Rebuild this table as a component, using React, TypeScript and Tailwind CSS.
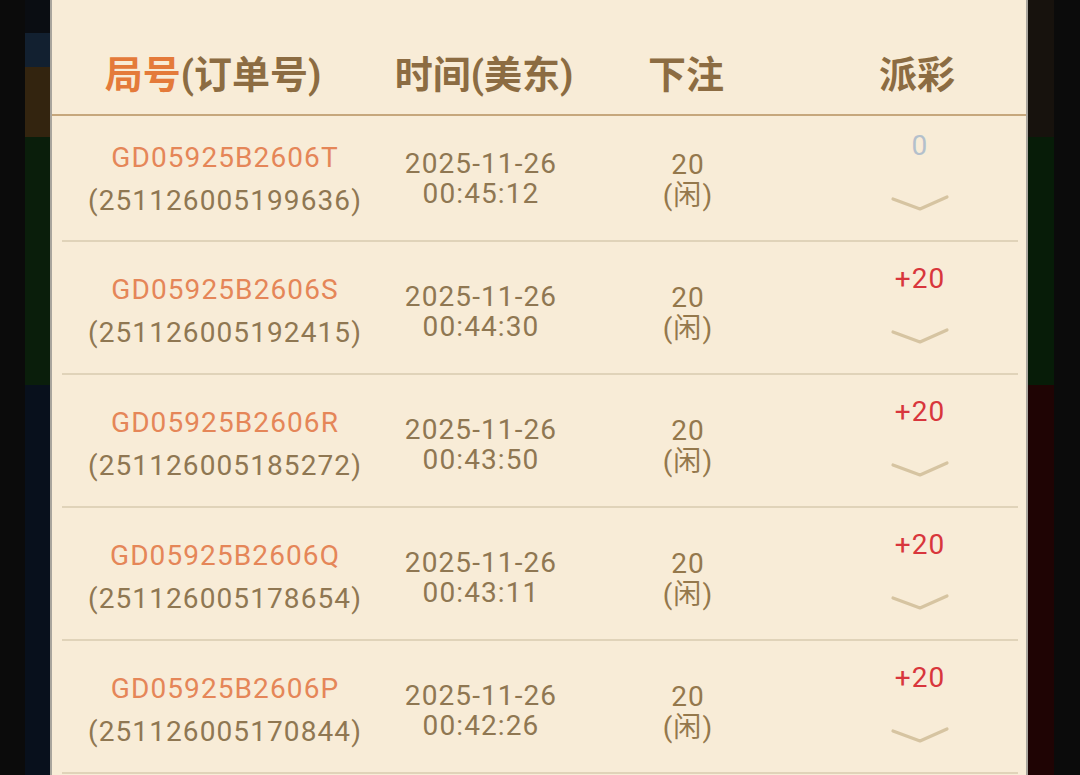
import React from "react";

type Row = { id: string; order: string; date: string; time: string; bet: string; side: string; payout: string };

const rows: Row[] = [
  { id: "GD05925B2606T", order: "(251126005199636)", date: "2025-11-26", time: "00:45:12", bet: "20", side: "(闲)", payout: "0" },
  { id: "GD05925B2606S", order: "(251126005192415)", date: "2025-11-26", time: "00:44:30", bet: "20", side: "(闲)", payout: "+20" },
  { id: "GD05925B2606R", order: "(251126005185272)", date: "2025-11-26", time: "00:43:50", bet: "20", side: "(闲)", payout: "+20" },
  { id: "GD05925B2606Q", order: "(251126005178654)", date: "2025-11-26", time: "00:43:11", bet: "20", side: "(闲)", payout: "+20" },
  { id: "GD05925B2606P", order: "(251126005170844)", date: "2025-11-26", time: "00:42:26", bet: "20", side: "(闲)", payout: "+20" },
];

const latin = { fontFamily: '"Roboto", "Noto Sans CJK SC", sans-serif' };

function Chevron() {
  return (
    <svg width="60" height="18" viewBox="0 0 60 18" className="block">
      <polyline points="3,5 30,15 57,3" fill="none" stroke="#d6c4a1" strokeWidth="3.2" strokeLinecap="round" strokeLinejoin="round" />
    </svg>
  );
}

function DataRow({ r, first }: { r: Row; first: boolean }) {
  return (
    <div
      className={`grid grid-cols-[326px_186px_228px_216px] border-b-2 border-[#e0d3b9] text-[28px] tracking-[1.1px] ${first ? "h-[126px]" : "h-[133px]"}`}
      style={latin}
    >
      <div className={`flex flex-col items-center leading-[43px] ${first ? "pt-[20px]" : "pt-[26px]"}`}>
        <div className="text-[#e58658]">{r.id}</div>
        <div className="text-[#8f7752]">{r.order}</div>
      </div>
      <div className={`flex flex-col items-center leading-[30px] text-[#8f7752] ${first ? "pt-[33px]" : "pt-[40px]"}`}>
        <div>{r.date}</div>
        <div>{r.time}</div>
      </div>
      <div className={`flex flex-col items-center leading-[31px] text-[#94784c] ${first ? "pt-[33px]" : "pt-[40px]"}`}>
        <div>{r.bet}</div>
        <div>{r.side}</div>
      </div>
      <div className={`flex flex-col items-center pl-[20px] leading-[30px] ${first ? "pt-[15px]" : "pt-[22px]"}`}>
        <div className={r.payout === "0" ? "text-[#b4c0cc]" : "text-[#d8363c]"}>{r.payout}</div>
        <div className="mt-[33px]">
          <Chevron />
        </div>
      </div>
    </div>
  );
}

export default function App() {
  return (
    <div className="flex h-[775px] w-[1080px] overflow-hidden bg-[#0b0b0b]">
      <div className="w-[25px] shrink-0 bg-[#0b0b0b]" />
      <div className="flex w-[25px] shrink-0 flex-col">
        <div className="h-[33px] bg-[#0a0d12]" />
        <div className="h-[34px] bg-[#122030]" />
        <div className="h-[70px] bg-[#33240f]" />
        <div className="h-[248px] bg-[#0a1e0b]" />
        <div className="flex-1 bg-[#08101c]" />
      </div>
      <div className="flex w-[978px] shrink-0 flex-col border-x-2 border-[#a9a59d] bg-[#f8ecd7]">
        <div
          className="grid h-[116px] grid-cols-[322px_220px_184px_248px] items-center border-b-2 border-[#c6a77c] pt-[36px] text-[38px] font-bold text-[#8c6c42]"
          style={latin}
        >
          <div className="text-center">
            <span className="text-[#e47a3a]">局号</span>(订单号)
          </div>
          <div className="text-center">时间(美东)</div>
          <div className="text-center">下注</div>
          <div className="pl-[30px] text-center">派彩</div>
        </div>
        <div className="ml-[10px] mr-[8px] flex flex-col">
          {rows.map((r, i) => (
            <DataRow key={r.id} r={r} first={i === 0} />
          ))}
        </div>
      </div>
      <div className="flex w-[26px] shrink-0 flex-col">
        <div className="h-[137px] bg-[#17120d]" />
        <div className="h-[248px] bg-[#071c08]" />
        <div className="flex-1 bg-[#1f0404]" />
      </div>
      <div className="flex-1 bg-[#0b0b0b]" />
    </div>
  );
}
